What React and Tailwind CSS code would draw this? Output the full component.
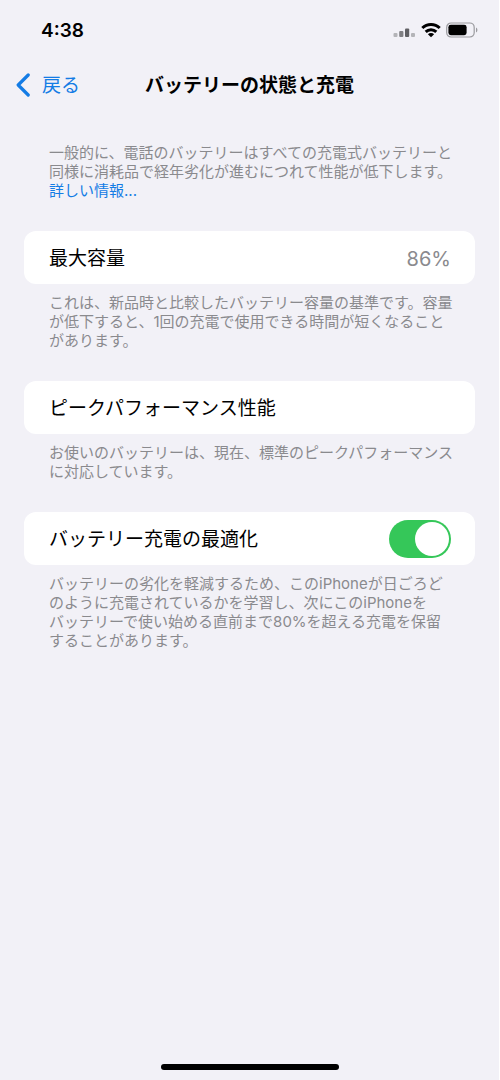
import { useState } from "react";

function StatusBar() {
  return (
    <div className="flex h-15 items-center justify-between pl-[41px] pr-5">
      <time className="pt-0.5 text-[19px] font-semibold text-black">4:38</time>
      <div className="flex items-center gap-1">
        <svg width="24" height="16" viewBox="0 0 24 16" aria-hidden="true">
          <rect x="0.5" y="11" width="4" height="4" rx="1" fill="#b4b4b8" />
          <rect x="6.2" y="9" width="4.2" height="6" rx="1" fill="#808084" />
          <rect x="12" y="6.5" width="4.2" height="8.5" rx="1" fill="#606064" />
          <rect x="18" y="11" width="4" height="4" rx="1" fill="#b4b4b8" />
        </svg>
        <svg width="20" height="16" viewBox="0 0 20 16" aria-hidden="true">
          <g fill="none" stroke="#000" strokeWidth="3">
            <path d="M1.3 6a12.4 12.4 0 0 1 17.4 0" />
            <path d="M4.7 9.9a7.6 7.6 0 0 1 10.6 0" />
          </g>
          <path d="M10 15.2 6.9 12.2a4.3 4.3 0 0 1 6.2 0z" fill="#000" />
        </svg>
        <svg width="34" height="16" viewBox="0 0 34 16" aria-hidden="true">
          <rect x="1.7" y="1" width="27.5" height="14" rx="4.4" fill="none" stroke="#9a9a9e" strokeWidth="1.2" />
          <rect x="3.4" y="2.8" width="18.2" height="10.4" rx="2.4" fill="#000" />
          <path d="M31 5.6v4.8a2.7 2.7 0 0 0 0-4.8z" fill="#9a9a9e" />
        </svg>
      </div>
    </div>
  );
}

function NavBar() {
  return (
    <header className="grid h-[50px] grid-cols-[1fr_auto_1fr] items-center px-4">
      <button type="button" className="flex items-center gap-3 justify-self-start text-[19px] text-[#147ce5]">
        <svg width="14" height="24" viewBox="0 0 14 24" aria-hidden="true">
          <path
            d="M12.2 2 2.2 12l10 10"
            fill="none"
            stroke="currentColor"
            strokeWidth="3.2"
            strokeLinecap="round"
            strokeLinejoin="round"
          />
        </svg>
        <span className="pt-0.5">戻る</span>
      </button>
      <h1 className="pt-0.5 text-[19px] font-bold text-black">バッテリーの状態と充電</h1>
    </header>
  );
}

function Note({ children }) {
  return (
    <p className="pl-[25px] pt-[9px] text-[15px] leading-[19px] text-[#8a8a8e] whitespace-nowrap">
      {children}
    </p>
  );
}

const rowClass =
  "flex h-[53px] items-center justify-between rounded-xl bg-white pl-[25px] pr-6 text-[19px] text-black";

export default function App() {
  const [optimized, setOptimized] = useState(true);

  return (
    <div className="flex min-h-screen flex-col border-r border-white bg-[#f2f1f7] font-['Inter','Noto_Sans_CJK_JP',sans-serif]">
      <StatusBar />
      <NavBar />

      <main className="flex flex-col gap-[31px] px-6 pt-6">
        <Note>
          一般的に、電話のバッテリーはすべての充電式バッテリーと
          <br />
          同様に消耗品で経年劣化が進むにつれて性能が低下します。
          <br />
          <a href="#info" className="text-[#147ce5]">
            詳しい情報...
          </a>
        </Note>

        <section>
          <div className={rowClass}>
            <h2 className="pt-1">最大容量</h2>
            <span className="pt-0.5 text-[20px] text-[#8a8a8e]">86%</span>
          </div>
          <Note>
            これは、新品時と比較したバッテリー容量の基準です。容量
            <br />
            が低下すると、1回の充電で使用できる時間が短くなること
            <br />
            があります。
          </Note>
        </section>

        <section>
          <div className={rowClass}>
            <h2 className="pt-1">ピークパフォーマンス性能</h2>
          </div>
          <Note>
            お使いのバッテリーは、現在、標準のピークパフォーマンス
            <br />
            に対応しています。
          </Note>
        </section>

        <section>
          <div className={rowClass}>
            <label htmlFor="optimized" className="pt-1">
              バッテリー充電の最適化
            </label>
            <input
              id="optimized"
              type="checkbox"
              role="switch"
              checked={optimized}
              onChange={(e) => setOptimized(e.target.checked)}
              className="flex h-[38px] w-[62px] cursor-pointer appearance-none items-center rounded-full bg-[#e9e9ea] p-0.5 transition before:size-[34px] before:rounded-full before:bg-white before:content-[''] checked:justify-end checked:bg-[#35c759]"
            />
          </div>
          <Note>
            バッテリーの劣化を軽減するため、このiPhoneが日ごろど
            <br />
            のように充電されているかを学習し、次にこのiPhoneを
            <br />
            バッテリーで使い始める直前まで80%を超える充電を保留
            <br />
            することがあります。
          </Note>
        </section>
      </main>

      {/* Home indicator */}
      <div className="mx-auto mt-auto mb-[10px] h-1.5 w-[178px] rounded-full bg-black" />
    </div>
  );
}
